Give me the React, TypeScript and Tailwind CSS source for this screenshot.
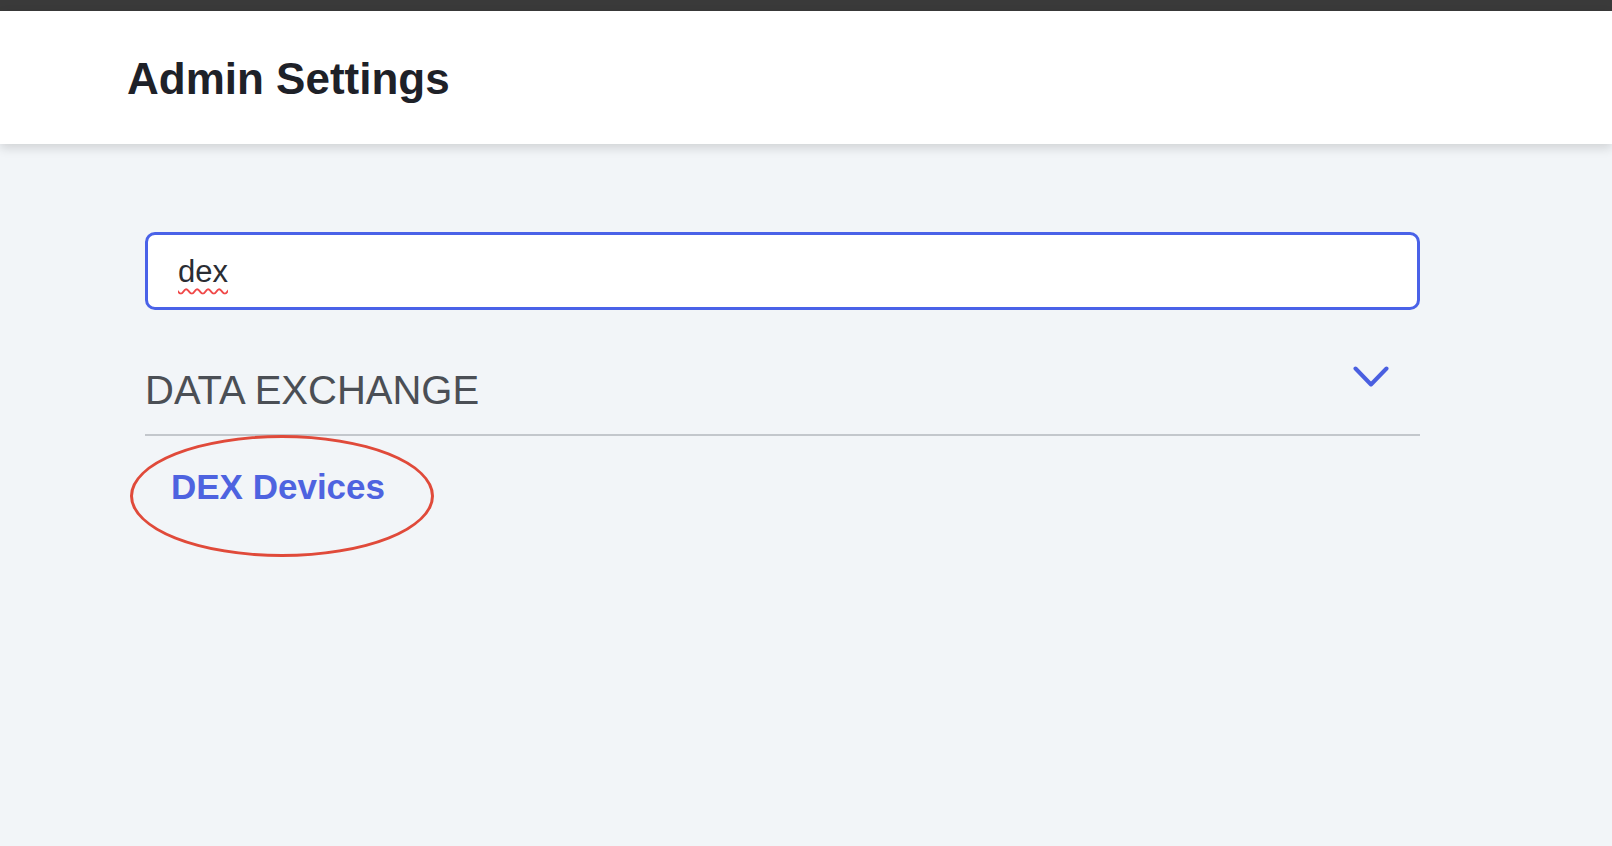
export default function App() {
  return (
    <div className="min-h-screen bg-[#f2f5f8] font-['Liberation_Sans',Arial,sans-serif]">
      <div className="h-[11px] bg-[#3a3a3a]" />
      <header className="relative z-10 flex h-[133px] items-center bg-white pl-[127px] pt-[3px] shadow-[0_4px_10px_rgba(0,0,0,0.14)]">
        <h1 className="text-[44px] font-bold leading-none text-[#1e2128]">Admin Settings</h1>
      </header>

      <main className="w-[1420px] pl-[145px] pt-[88px]">
        <div className="flex h-[78px] items-center rounded-[10px] border-[3.5px] border-[#4a62e8] bg-white pl-[30px]">
          <span className="text-[31px] leading-none text-[#2a2d33] underline decoration-wavy decoration-[#f04848] decoration-2 underline-offset-[6px]">
            dex
          </span>
        </div>

        <div className="mt-[60px] flex items-start justify-between border-b-2 border-[#c3c7cc] pb-[24px]">
          <span className="text-[40px] leading-none text-[#4b4f55]">DATA EXCHANGE</span>
          <svg width="36" height="22" viewBox="0 0 36 22" className="mr-[31px] mt-[-4px]" fill="none">
            <polyline points="2.5,2.5 18,18.5 33.5,2.5" stroke="#4a5fe0" strokeWidth="4" strokeLinecap="round" strokeLinejoin="round" />
          </svg>
        </div>

        <div className="relative">
          <a className="ml-[26px] mt-[33px] inline-block text-[35px] font-bold leading-none text-[#4e63e0]">DEX Devices</a>
          <div className="absolute left-[-15px] top-[-1px] h-[122px] w-[304px] rounded-[50%] border-[3px] border-[#e04a3a]" />
        </div>
      </main>
    </div>
  );
}
